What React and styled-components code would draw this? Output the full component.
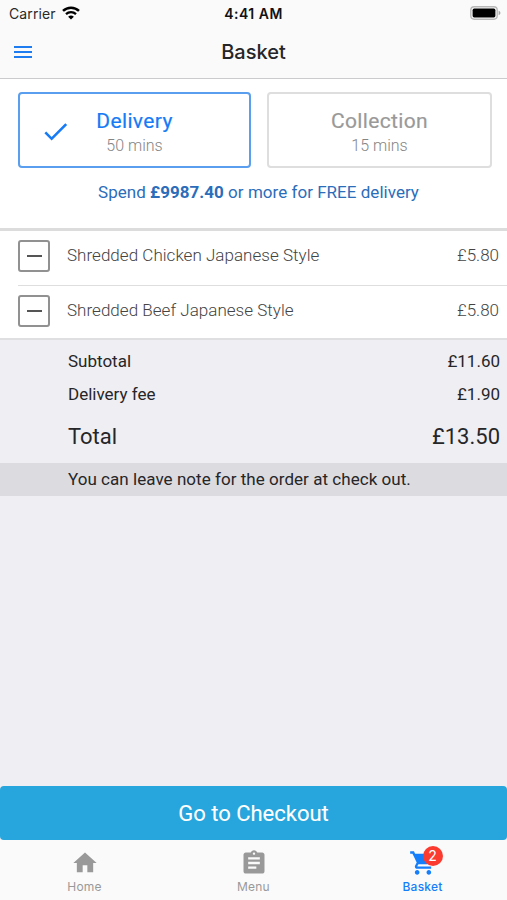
import styled, { createGlobalStyle } from 'styled-components';
import {
  MdAssignment,
  MdCheck,
  MdHome,
  MdMenu,
  MdShoppingCart,
} from 'react-icons/md';

const items = [
  { id: 1, name: 'Shredded Chicken Japanese Style', price: '£5.80' },
  { id: 2, name: 'Shredded Beef Japanese Style', price: '£5.80' },
];

export default function App() {
  return (
    <Screen>
      <GlobalStyle />
      <Header>
        <StatusBar>
          <Carrier>
            Carrier
            <WifiIcon />
          </Carrier>
          <Time>4:41 AM</Time>
          <BatteryIcon />
        </StatusBar>
        <NavBar>
          <MenuButton aria-label='Open menu'>
            <MdMenu />
          </MenuButton>
          <Title>Basket</Title>
        </NavBar>
      </Header>

      <OrderType>
        <Options>
          <Option $active>
            <Check />
            <OptionName>Delivery</OptionName>
            <OptionTime>50 mins</OptionTime>
          </Option>
          <Option>
            <OptionName>Collection</OptionName>
            <OptionTime>15 mins</OptionTime>
          </Option>
        </Options>
        <Promo>
          Spend <b>£9987.40</b> or more for FREE delivery
        </Promo>
      </OrderType>

      <Items>
        {items.map((item) => (
          <Item key={item.id}>
            <RemoveButton aria-label={`Remove ${item.name}`} />
            <ItemName>{item.name}</ItemName>
            <ItemPrice>{item.price}</ItemPrice>
          </Item>
        ))}
      </Items>

      <Summary>
        <SummaryRow>
          <span>Subtotal</span>
          <span>£11.60</span>
        </SummaryRow>
        <SummaryRow>
          <span>Delivery fee</span>
          <span>£1.90</span>
        </SummaryRow>
        <SummaryRow $total>
          <span>Total</span>
          <span>£13.50</span>
        </SummaryRow>
      </Summary>
      <Note>You can leave note for the order at check out.</Note>

      <CheckoutButton>Go to Checkout</CheckoutButton>
      <TabBar>
        <Tab>
          <MdHome />
          Home
        </Tab>
        <Tab>
          <MdAssignment />
          Menu
        </Tab>
        <Tab $active>
          <MdShoppingCart />
          Basket
          <Badge>2</Badge>
        </Tab>
      </TabBar>
    </Screen>
  );
}

function WifiIcon() {
  return (
    <svg width='18' height='14' viewBox='0 0 18 14' fill='none'>
      <path d='M1 4.9a11.6 11.6 0 0 1 16 0' stroke='#000' strokeWidth='2.5' />
      <path d='M4 8.2a7.3 7.3 0 0 1 10 0' stroke='#000' strokeWidth='2.3' />
      <path d='M9 13.6 6.1 10.8a4.2 4.2 0 0 1 5.8 0Z' fill='#000' />
    </svg>
  );
}

function BatteryIcon() {
  return (
    <svg width='31' height='14' viewBox='0 0 31 14' fill='none'>
      <rect
        x='0.8'
        y='0.8'
        width='26.4'
        height='12.4'
        rx='3.4'
        stroke='#b8b8b8'
        strokeWidth='1.4'
      />
      <rect x='2.6' y='2.6' width='22.8' height='8.8' rx='1.6' fill='#000' />
      <path d='M28.6 4.8c2.4.7 2.4 3.7 0 4.4Z' fill='#a6a6a6' />
    </svg>
  );
}

const GlobalStyle = createGlobalStyle`
  * {
    box-sizing: border-box;
  }

  body {
    margin: 0;
  }

  button {
    padding: 0;
    border: none;
    background: none;
    font: inherit;
    color: inherit;
  }
`;

const Screen = styled.main`
  display: flex;
  flex-direction: column;
  height: 900px;
  overflow: hidden;
  background-color: #efeef3;
  font-family: Roboto, sans-serif;
  color: #262628;
`;

const Header = styled.header`
  height: 79px;
  background-color: #fafafa;
  border-bottom: 1px solid #cbcbcd;
`;

const StatusBar = styled.div`
  display: grid;
  grid-template-columns: 1fr auto 1fr;
  align-items: center;
  height: 26px;
  padding: 0 6px 0 9px;
  font-family: Inter, sans-serif;
  font-size: 14px;
  color: #111;

  > :last-child {
    justify-self: end;
  }
`;

const Carrier = styled.span`
  display: flex;
  align-items: center;
  gap: 6px;
  letter-spacing: 0.1px;
  color: #2a2a2a;
`;

const Time = styled.span`
  margin-right: 3px;
  font-weight: 600;
  letter-spacing: 0.5px;
`;

const NavBar = styled.div`
  display: grid;
  grid-template-columns: 1fr auto 1fr;
  align-items: center;
  height: 52px;
  padding: 0 11px;
`;

const MenuButton = styled.button`
  display: flex;
  font-size: 24px;
  color: #1f7cf0;
`;

const Title = styled.h1`
  margin: 0;
  font-family: Inter, sans-serif;
  font-size: 20px;
  font-weight: 500;
`;

const OrderType = styled.section`
  height: 152px;
  padding: 13px 16px 0 18px;
  background-color: #fff;
  border-bottom: 3px solid #dcdcdc;
`;

const Options = styled.div`
  display: grid;
  grid-template-columns: 233px 225px;
  gap: 16px;
`;

const Option = styled.button`
  position: relative;
  display: flex;
  flex-direction: column;
  align-items: center;
  height: 76px;
  padding-top: 14px;
  border: 2px solid ${(p) => (p.$active ? '#5a9fef' : '#dedede')};
  border-radius: 4px;
  color: ${(p) => (p.$active ? '#167bf5' : '#999')};
`;

const Check = styled(MdCheck)`
  position: absolute;
  top: 22px;
  left: 20px;
  font-size: 31px;
`;

const OptionName = styled.span`
  font-size: 21px;
  font-weight: 400;
  letter-spacing: 0.35px;
  line-height: 26px;
  -webkit-text-stroke: 0.2px;
`;

const OptionTime = styled.span`
  font-size: 16px;
  font-weight: 300;
  line-height: 23px;
  color: #858585;
`;

const Promo = styled.p`
  margin: 12px 0 0 8px;
  font-size: 17px;
  letter-spacing: 0.03px;
  line-height: 24px;
  text-align: center;
  color: #2c6dba;
`;

const Items = styled.ul`
  margin: 0;
  padding: 0 0 0 18px;
  list-style: none;
  background-color: #fff;
  border-bottom: 2px solid #dfdfe1;
`;

const Item = styled.li`
  display: flex;
  align-items: center;
  height: 54px;
  padding: 0 8px 4px 0;
  font-size: 17px;
  font-weight: 300;
  color: #444;

  & + & {
    height: 53px;
    padding-bottom: 3px;
    border-top: 1px solid #dedede;
  }
`;

const RemoveButton = styled.button`
  display: grid;
  place-items: center;
  width: 32px;
  height: 32px;
  border: 2px solid #919191;
  border-radius: 3px;

  &::before {
    content: '';
    width: 15px;
    height: 2px;
    background-color: #555;
  }
`;

const ItemName = styled.span`
  flex: 1;
  margin-left: 17px;
  padding-bottom: 2px;
  letter-spacing: 0.03px;
`;

const ItemPrice = styled.span`
  padding-bottom: 2px;
`;

const Summary = styled.section`
  height: 123px;
  padding: 4px 7px 0 68px;
`;

const SummaryRow = styled.div`
  display: flex;
  justify-content: space-between;
  align-items: center;
  height: ${(p) => (p.$total ? '53px' : '33px')};
  font-size: ${(p) => (p.$total ? '22px' : '17px')};
`;

const Note = styled.p`
  margin: 0;
  padding-left: 68px;
  font-size: 17px;
  letter-spacing: 0.04px;
  line-height: 33px;
  background-color: #dcdbe0;
`;

const CheckoutButton = styled.button`
  height: 54px;
  margin-top: auto;
  border-radius: 4px;
  background-color: #26a6dc;
  font-size: 22px;
  font-weight: 400;
  -webkit-text-stroke: 0.1px;
  color: #fff;
`;

const TabBar = styled.nav`
  display: grid;
  grid-template-columns: repeat(3, 1fr);
  height: 60px;
  background-color: #fafafa;
`;

const Tab = styled.a`
  position: relative;
  display: flex;
  flex-direction: column;
  align-items: center;
  padding-top: 9px;
  font-family: Inter, sans-serif;
  font-size: 12px;
  font-weight: ${(p) => (p.$active ? 500 : 400)};
  letter-spacing: 0.2px;
  line-height: 18px;
  color: ${(p) => (p.$active ? '#157efb' : '#999')};

  svg {
    margin-bottom: 1px;
    font-size: 28px;
  }
`;

const Badge = styled.span`
  position: absolute;
  top: 6px;
  left: 50%;
  width: 20px;
  height: 20px;
  border-radius: 50%;
  background-color: #fb3b30;
  font-size: 14px;
  font-weight: 400;
  line-height: 20px;
  text-align: center;
  color: #fff;
`;
